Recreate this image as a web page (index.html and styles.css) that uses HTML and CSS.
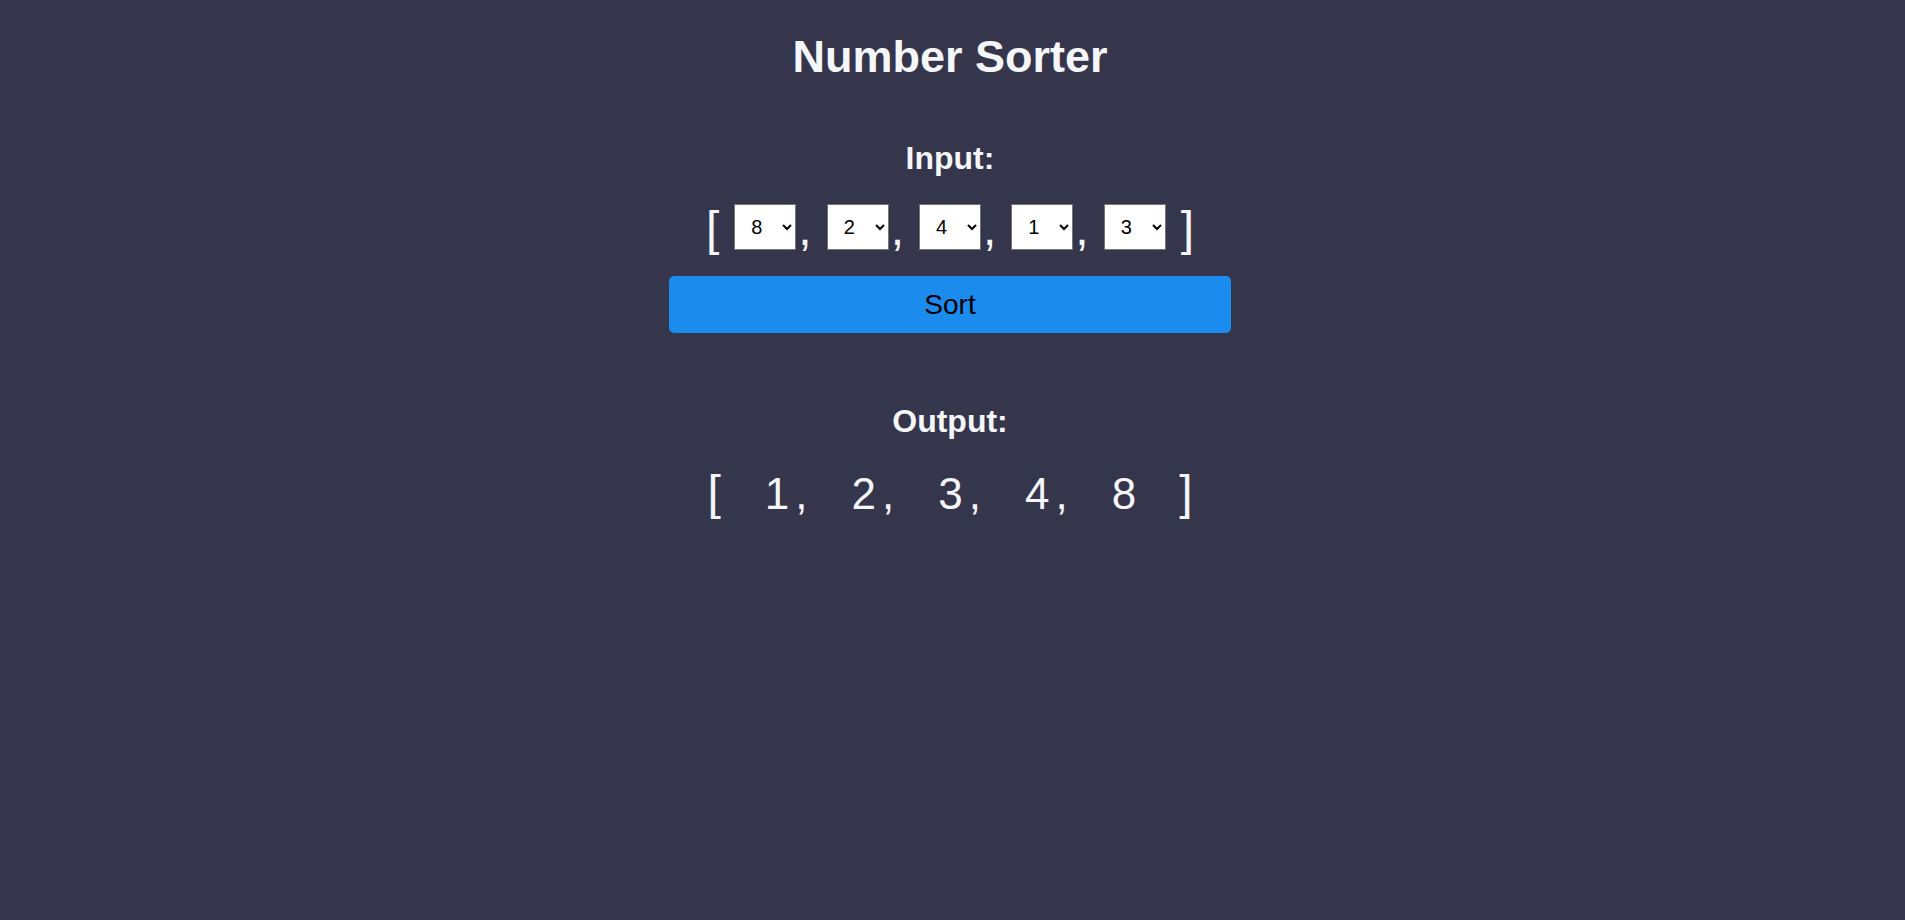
FILE: index.html
```html
<!DOCTYPE html>
<html lang="en">
<head>
<meta charset="utf-8">
<title>Number Sorter</title>
<link rel="stylesheet" href="styles.css">
</head>
<body>
<main class="app">
  <h1 class="title">Number Sorter</h1>
  <h2 class="label label-input">Input:</h2>
  <div class="input-row">
    <span class="br br-open">[</span>
    <select class="num-select"><option>1</option><option>2</option><option>3</option><option>4</option><option>5</option><option>6</option><option>7</option><option selected>8</option><option>9</option></select>
    <span class="comma">,</span>
    <select class="num-select"><option>1</option><option selected>2</option><option>3</option><option>4</option><option>5</option><option>6</option><option>7</option><option>8</option><option>9</option></select>
    <span class="comma">,</span>
    <select class="num-select"><option>1</option><option>2</option><option>3</option><option selected>4</option><option>5</option><option>6</option><option>7</option><option>8</option><option>9</option></select>
    <span class="comma">,</span>
    <select class="num-select"><option selected>1</option><option>2</option><option>3</option><option>4</option><option>5</option><option>6</option><option>7</option><option>8</option><option>9</option></select>
    <span class="comma">,</span>
    <select class="num-select"><option>1</option><option>2</option><option selected>3</option><option>4</option><option>5</option><option>6</option><option>7</option><option>8</option><option>9</option></select>
    <span class="br br-close">]</span>
  </div>
  <button class="sort-btn" type="button">Sort</button>
  <h2 class="label label-output">Output:</h2>
  <div class="output-row">
    <span class="br">[</span>
    <span class="digit">1</span><span class="ocomma">,</span>
    <span class="digit">2</span><span class="ocomma">,</span>
    <span class="digit">3</span><span class="ocomma">,</span>
    <span class="digit">4</span><span class="ocomma">,</span>
    <span class="digit">8</span>
    <span class="br br-end">]</span>
  </div>
</main>
</body>
</html>
```
FILE: styles.css
```css
html, body {
  margin: 0;
  padding: 0;
  height: 100%;
}

body {
  background: #35354b;
  color: #f4f6f9;
  font-family: "Liberation Sans", Arial, sans-serif;
}

.app {
  display: flex;
  flex-direction: column;
  align-items: center;
  padding: 31px 5px 0 0;
}

.title {
  margin: 0;
  font-size: 45px;
  line-height: 52px;
  font-weight: 700;
}

.label {
  margin: 0;
  font-size: 32px;
  line-height: 37px;
  font-weight: 700;
}

.label-input {
  margin-top: 57px;
}

.label-output {
  margin-top: 70px;
}

.input-row {
  margin-top: 25px;
  display: flex;
  align-items: flex-start;
  font-size: 48px;
  line-height: 54px;
}

.br-open {
  margin-right: 15px;
}

.br-close {
  margin-left: 15px;
}

.comma {
  margin: 0 15px 0 2px;
}

.num-select {
  margin-top: 2px;
  width: 62px;
  height: 46px;
  padding: 0 0 0 12px;
  font-family: "Liberation Sans", Arial, sans-serif;
  font-size: 20px;
  color: #000;
  background: #fff;
  border: 1px solid #767676;
  border-radius: 0;
}

.sort-btn {
  margin-top: 20px;
  width: 562px;
  height: 57px;
  border: none;
  border-radius: 5px;
  background: #1b8cee;
  color: #000;
  font-family: "Liberation Sans", Arial, sans-serif;
  font-size: 28px;
  cursor: pointer;
}

.output-row {
  margin-top: 26px;
  display: flex;
  align-items: baseline;
  font-size: 48px;
  line-height: 54px;
}

.digit {
  font-size: 44px;
  margin-left: 44px;
}

.ocomma {
  font-size: 44px;
  margin-left: 6px;
}

.br-end {
  margin-left: 43px;
}
```
